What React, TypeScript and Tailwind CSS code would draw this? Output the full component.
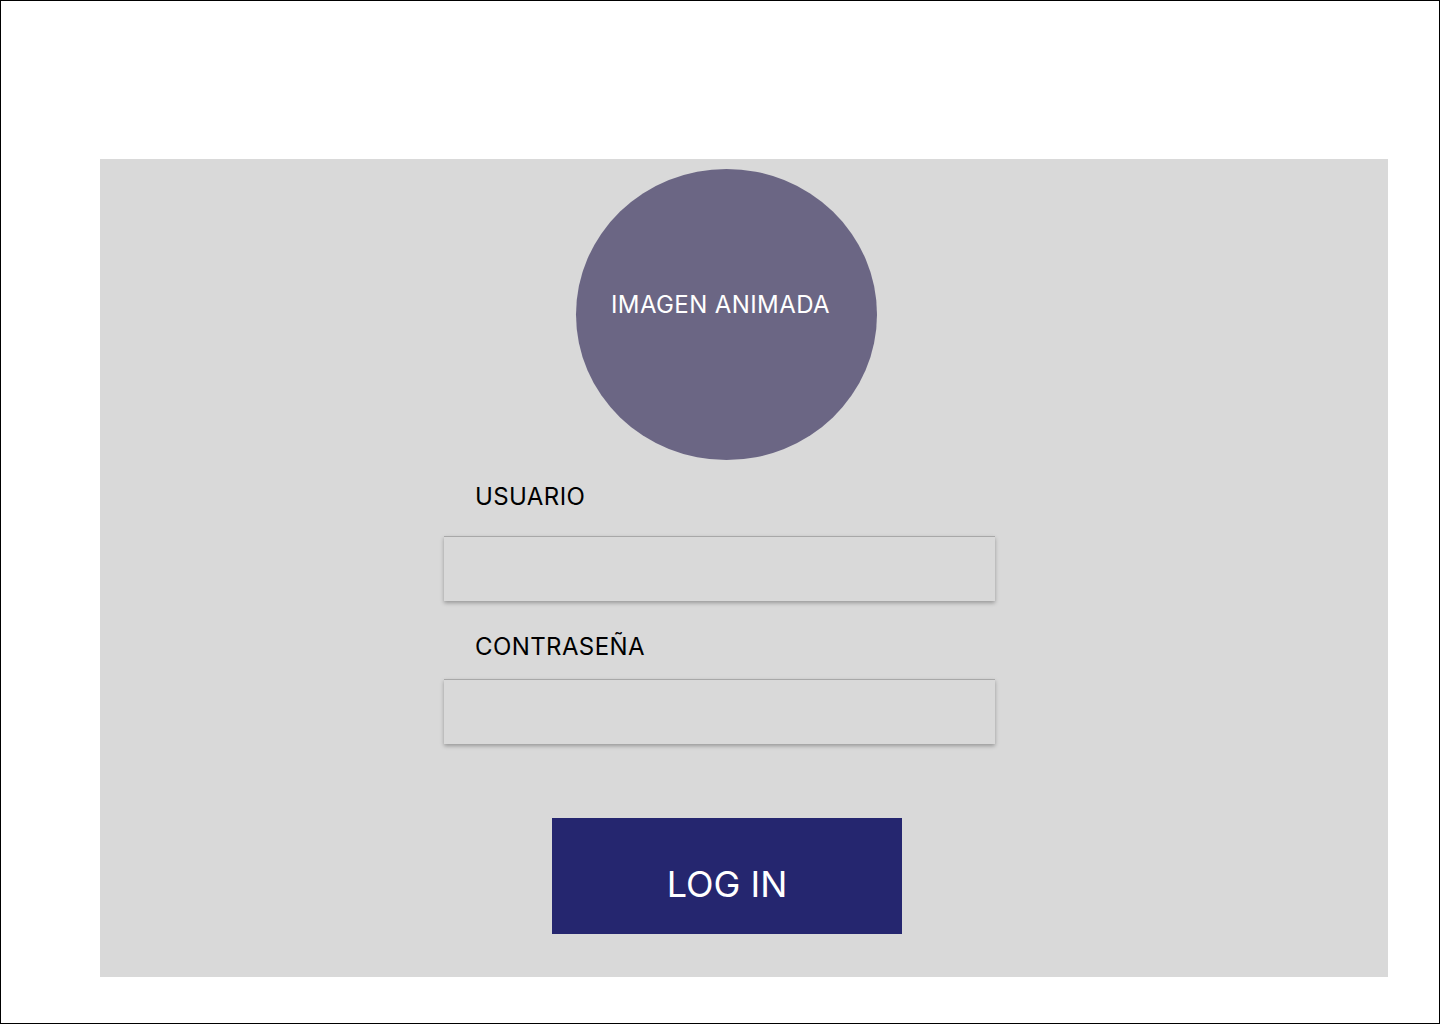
export default function App() {
  return (
    <div className="h-[1024px] w-[1440px] overflow-hidden border border-black bg-white font-['Inter',sans-serif]">
      <div className="ml-[99px] mt-[158px] h-[818px] w-[1288px] bg-[#d9d9d9] pl-[344px]">
        <div className="flex flex-col items-start">
          <div className="ml-[132px] mt-[10px] flex h-[291px] w-[301px] items-center justify-center rounded-[50%] bg-[#6b6684]">
            <span className="mb-[20px] mr-[12px] text-[24px] leading-[28px] tracking-[0.4px] text-white">
              IMAGEN ANIMADA
            </span>
          </div>

          <label className="ml-[31px] mt-[23px] text-[24px] leading-[28px] tracking-[0.4px] text-black">
            USUARIO
          </label>
          <input
            type="text"
            className="mt-[25px] h-[65px] w-[551px] border-t border-[#a8a8a8] bg-[#d9d9d9] shadow-[0_2px_4px_rgba(0,0,0,0.3)] outline-none"
          />

          <label className="ml-[31px] mt-[32px] text-[24px] leading-[28px] tracking-[0.4px] text-black">
            CONTRASEÑA
          </label>
          <input
            type="password"
            className="mt-[18px] h-[65px] w-[551px] border-t border-[#a8a8a8] bg-[#d9d9d9] shadow-[0_2px_4px_rgba(0,0,0,0.3)] outline-none"
          />

          <button className="ml-[108px] mt-[74px] flex h-[116px] w-[350px] items-center justify-center bg-[#25266f] pt-[16px] text-[36px] leading-[40px] text-white">
            LOG IN
          </button>
        </div>
      </div>
    </div>
  )
}
